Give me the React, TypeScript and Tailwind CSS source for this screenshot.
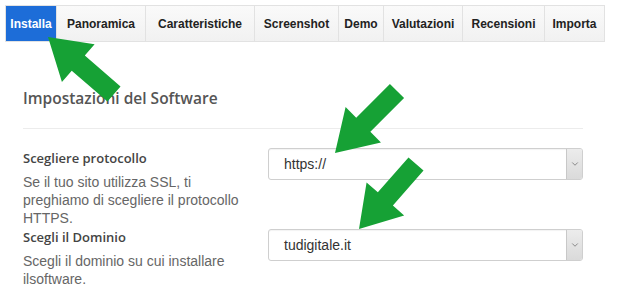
import { ChevronDown } from "lucide-react";

const tabs = [
  { label: "Installa", w: "w-[51px]", active: true },
  { label: "Panoramica", w: "w-[89px]" },
  { label: "Caratteristiche", w: "w-[109px]" },
  { label: "Screenshot", w: "w-[84px]" },
  { label: "Demo", w: "w-[45px]" },
  { label: "Valutazioni", w: "w-[79px]" },
  { label: "Recensioni", w: "w-[82px]" },
  { label: "Importa", w: "w-[59px]" },
];

// big green pointer arrows drawn over the page
function arrowPoints(tip: [number, number], tail: [number, number]) {
  const w = 20;
  const h = 50;
  const hl = 40;
  const dx = tip[0] - tail[0];
  const dy = tip[1] - tail[1];
  const len = Math.hypot(dx, dy);
  const ux = dx / len;
  const uy = dy / len;
  const nx = -uy;
  const ny = ux;
  const bx = tip[0] - ux * hl;
  const by = tip[1] - uy * hl;
  const pts = [
    [tail[0] + (nx * w) / 2, tail[1] + (ny * w) / 2],
    [bx + (nx * w) / 2, by + (ny * w) / 2],
    [bx + (nx * h) / 2, by + (ny * h) / 2],
    tip,
    [bx - (nx * h) / 2, by - (ny * h) / 2],
    [bx - (nx * w) / 2, by - (ny * w) / 2],
    [tail[0] - (nx * w) / 2, tail[1] - (ny * w) / 2],
  ];
  return pts.map((p) => p.join(",")).join(" ");
}

const arrows: [[number, number], [number, number]][] = [
  [[48, 37], [114, 94]],
  [[335, 153], [397, 91]],
  [[359, 229], [416, 164]],
];

function Select({ value }: { value: string }) {
  return (
    <div className="flex h-[32px] w-[315px] overflow-hidden rounded-[3px] border border-[#cfcfcf] bg-white shadow-[inset_0_1px_1px_rgba(0,0,0,0.05)]">
      <div className="flex flex-1 items-center pl-[15px] font-['Liberation_Sans',Arial,sans-serif] text-[14px] text-[#333]">
        {value}
      </div>
      <div className="flex w-[16px] items-center justify-center border-l border-[#c8c8c8] bg-gradient-to-b from-[#ececec] to-[#dadada]">
        <ChevronDown className="h-[10px] w-[10px] text-[#777]" strokeWidth={2} />
      </div>
    </div>
  );
}

export default function App() {
  return (
    <div className="relative h-[301px] w-[620px] overflow-hidden bg-white">
      <div className="ml-[5px] mt-[5px] flex h-[37px] w-fit border border-[#e2e2e2] bg-[#f5f5f5]">
        {tabs.map((t) => (
          <div
            key={t.label}
            className={`flex items-center justify-center border-r border-[#e2e2e2] font-['Liberation_Sans',Arial,sans-serif] text-[12px] font-bold last:border-r-0 ${t.w} ${
              t.active ? "bg-[#1d6dd8] text-white" : "bg-gradient-to-b from-[#fafafa] to-[#f1f1f1] text-[#222]"
            }`}
          >
            {t.label}
          </div>
        ))}
      </div>

      <div className="mx-[23px] w-[560px]">
        <h2 className="mt-[44px] font-['Open_Sans',sans-serif] text-[15.5px] font-semibold leading-[24px] text-[#555]">
          Impostazioni del Software
        </h2>
        <div className="mt-[18px] border-t border-[#ececec]" />

        {/* protocollo */}
        <div className="mt-[19px] flex">
          <div className="w-[245px] pt-[1px]">
            <div className="font-['Open_Sans',sans-serif] text-[13px] font-semibold leading-[18px] text-[#444]">
              Scegliere protocollo
            </div>
            <p className="mt-[6px] w-[225px] font-['Liberation_Sans',Arial,sans-serif] text-[14px] leading-[18px] text-[#666]">
              Se il tuo sito utilizza SSL, ti preghiamo di scegliere il protocollo HTTPS.
            </p>
          </div>
          <Select value="https://" />
        </div>

        {/* dominio */}
        <div className="mt-[1px] flex">
          <div className="w-[245px]">
            <div className="font-['Open_Sans',sans-serif] text-[13px] font-semibold leading-[18px] text-[#444]">
              Scegli il Dominio
            </div>
            <p className="mt-[6px] w-[225px] font-['Liberation_Sans',Arial,sans-serif] text-[14px] leading-[18px] text-[#666]">
              Scegli il dominio su cui installare ilsoftware.
            </p>
          </div>
          <div className="pt-[1px]">
            <Select value="tudigitale.it" />
          </div>
        </div>
      </div>

      <svg className="pointer-events-none absolute inset-0" width="620" height="301">
        {arrows.map(([tip, tail], i) => (
          <polygon key={i} points={arrowPoints(tip, tail)} fill="#16a135" />
        ))}
      </svg>
    </div>
  );
}
